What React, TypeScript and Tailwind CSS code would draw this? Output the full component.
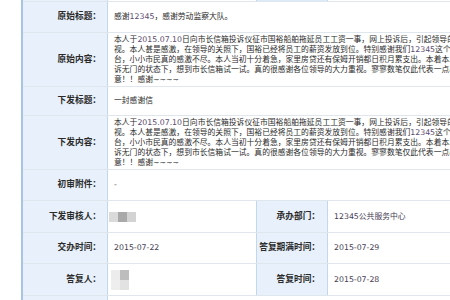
import React from "react";

const lines = [
  ["本人于", "2015.07.10", "日向市长信箱投诉仪征市国裕船舶拖延员工工资一事，网上投诉后，引起领导的高度重"],
  ["视。本人甚是感激，在领导的关照下，国裕已经将员工的薪资发放到位。特别感谢我们", "12345", "这个平"],
  ["台，小小市民真的感激不尽。本人当初十分着急，家里房贷还有保姆开销都日积月累支出。本着本人投"],
  ["诉无门的状态下，想到市长信箱试一试。真的很感谢各位领导的大力重视。寥寥数笔仅此代表一点心"],
  ["意！！感谢~~~~"],
];

function Content() {
  return (
    <div className="flex flex-col py-[2px] pl-[6px] leading-[10px] text-[#2a2a2a]">
      {lines.map((parts, i) => (
        <div key={i} className="whitespace-nowrap">
          {parts.map((p, j) =>
            /^[0-9.]+$/.test(p) ? (
              <span key={j} className="text-[#5b4a70]">
                {p}
              </span>
            ) : (
              <span key={j}>{p}</span>
            )
          )}
        </div>
      ))}
    </div>
  );
}

function Label({ children }: { children: React.ReactNode }) {
  return (
    <div className="w-[85px] shrink-0 flex items-center justify-end pr-[6px] bg-[#e8f1fb] border-r border-[#c3d7ec] font-bold text-[8.7px] text-[#2a2a2a] whitespace-nowrap">
      {children}
    </div>
  );
}

function Row({
  label,
  h,
  children,
}: {
  label: string;
  h: string;
  children: React.ReactNode;
}) {
  return (
    <div className={`flex border-b border-[#dfe6ee] ${h}`}>
      <Label>{label}</Label>
      <div className="flex-1 flex items-center">{children}</div>
    </div>
  );
}

function Mosaic({ cells, cols }: { cells: string[]; cols: number }) {
  return (
    <div
      className="grid"
      style={{ gridTemplateColumns: `repeat(${cols}, 9px)`, gridAutoRows: "10px" }}
    >
      {cells.map((c, i) => (
        <div key={i} style={{ background: c }} />
      ))}
    </div>
  );
}

function PairRow({
  label,
  value,
  label2,
  value2,
  h,
}: {
  label: string;
  value: React.ReactNode;
  label2: string;
  value2: string;
  h: string;
}) {
  return (
    <div className={`flex border-b border-[#dfe6ee] ${h}`}>
      <Label>{label}</Label>
      <div className="w-[148px] shrink-0 flex items-center text-[#463d55]">{value}</div>
      <div className="w-[72px] shrink-0 flex items-center justify-end pr-[7px] bg-[#e8f1fb] border-l border-r border-[#c3d7ec] font-bold text-[8.7px] text-[#2a2a2a] whitespace-nowrap">
        {label2}
      </div>
      <div className="flex-1 flex items-center pl-[6px] text-[#463d55]">{value2}</div>
    </div>
  );
}

export default function App() {
  return (
    <div className="w-[450px] h-[300px] overflow-hidden bg-white font-['DejaVu_Sans','Noto_Sans_CJK_SC',sans-serif] text-[7.8px]">
      <div className="ml-[21px] w-[720px] border-l-2 border-[#a9c5e4]">
        {/* tail of the previous record row */}
        <div className="flex h-[2px] border-b border-[#dfe6ee]">
          <div className="w-[85px] shrink-0 bg-[#e8f1fb] border-r border-[#c3d7ec]" />
          <div className="w-[148px] shrink-0" />
          <div className="w-[72px] shrink-0 bg-[#dce9f6] border-l border-r border-[#c3d7ec]" />
          <div className="flex-1" />
        </div>

        <Row label="原始标题：" h="h-[31px]">
          <span className="pl-[6px] text-[#2a2a2a] whitespace-nowrap">
            感谢<span className="text-[#5b4a70]">12345</span>，感谢劳动监察大队。
          </span>
        </Row>

        <Row label="原始内容：" h="h-[54px]">
          <Content />
        </Row>

        <Row label="下发标题：" h="h-[29px]">
          <span className="pl-[6px] text-[#2a2a2a]">一封感谢信</span>
        </Row>

        <Row label="下发内容：" h="h-[54px]">
          <Content />
        </Row>

        <Row label="初审附件：" h="h-[31px]">
          <span className="pl-[6px] text-[#555]">-</span>
        </Row>

        <PairRow
          label="下发审核人："
          value={
            <div className="pl-[1px]">
              <Mosaic cols={3} cells={["#dadada", "#a9a9a9", "#d3d3d3"]} />
            </div>
          }
          label2="承办部门："
          value2="12345公共服务中心"
          h="h-[32px]"
        />

        <PairRow
          label="交办时间："
          value={<span className="pl-[6px]">2015-07-22</span>}
          label2="答复期满时间："
          value2="2015-07-29"
          h="h-[31px]"
        />

        <PairRow
          label="答复人："
          value={
            <div className="pl-[3px]">
              <Mosaic cols={2} cells={["#ececec", "#bdbdbd", "#eeeeee", "#e2e2e2"]} />
            </div>
          }
          label2="答复时间："
          value2="2015-07-28"
          h="h-[32px]"
        />

        <div className="flex h-[20px]">
          <div className="w-[85px] shrink-0 bg-[#e8f1fb] border-r border-[#c3d7ec]" />
          <div className="flex-1" />
        </div>
      </div>
    </div>
  );
}
